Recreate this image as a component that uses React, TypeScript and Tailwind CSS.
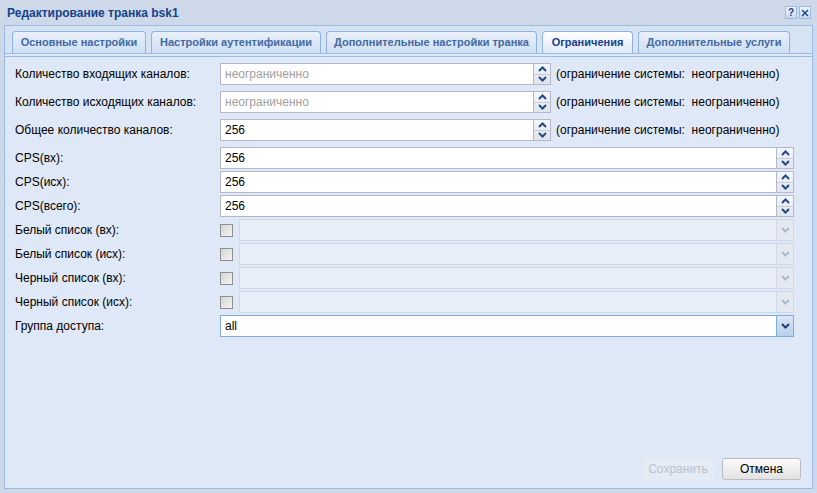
import React from "react";

const font = { fontFamily: '"Liberation Sans", Arial, sans-serif' };

function Chevron({ up, color = "#1f4a8a" }: { up?: boolean; color?: string }) {
  return (
    <svg width="9" height="6" viewBox="0 0 9 6">
      <path d={up ? "M1 5 L4.5 1.5 L8 5" : "M1 1 L4.5 4.5 L8 1"} fill="none" stroke={color} strokeWidth="2" />
    </svg>
  );
}

function Spinner() {
  return (
    <div className="flex h-full w-[17px] shrink-0 flex-col border-l border-[#b5b8c8] bg-gradient-to-b from-[#f4f6fa] to-[#dfe3ea]">
      <div className="flex flex-1 items-center justify-center border-b border-[#c8ccd6]">
        <Chevron up />
      </div>
      <div className="flex flex-1 items-center justify-center">
        <Chevron />
      </div>
    </div>
  );
}

function NumberField({ value, placeholder, wide }: { value?: string; placeholder?: string; wide?: boolean }) {
  return (
    <div className={`flex h-[22px] items-stretch border border-[#b5b8c8] bg-white ${wide ? "flex-1" : "w-[331px]"}`}>
      <div className={`flex flex-1 items-center px-[4px] text-[12px] ${value ? "text-black" : "text-[#a0a0a0]"}`}>
        {value ?? placeholder}
      </div>
      <Spinner />
    </div>
  );
}

function Combo({ value, disabled }: { value?: string; disabled?: boolean }) {
  return (
    <div
      className={`flex h-[22px] flex-1 items-stretch border ${
        disabled ? "border-[#d0d8e6] bg-[#e8eef8]" : "border-[#7eadd9] bg-white"
      }`}
    >
      <div className="flex flex-1 items-center px-[4px] text-[12px] text-black">{value}</div>
      <div
        className={`flex w-[17px] shrink-0 items-center justify-center border-l ${
          disabled ? "border-[#d0d8e6] bg-[#e3e8f1]" : "border-[#7eadd9] bg-gradient-to-b from-[#dbe7f5] to-[#b9cfe9]"
        }`}
      >
        <Chevron color={disabled ? "#a9b8cf" : "#1f3f73"} />
      </div>
    </div>
  );
}

function Checkbox() {
  return <div className="h-[13px] w-[13px] shrink-0 border border-[#8e8f91] bg-gradient-to-br from-[#d4d4d4] to-[#f5f5f5]" />;
}

function Row({ label, children, mb = "mb-[2px]" }: { label: string; children: React.ReactNode; mb?: string }) {
  return (
    <div className={`flex h-[22px] items-center ${mb}`}>
      <div className="w-[205px] shrink-0 text-[12px] text-black">{label}</div>
      {children}
    </div>
  );
}

const tabs = [
  { t: "Основные настройки", w: "w-[134px]" },
  { t: "Настройки аутентификации", w: "w-[170px]" },
  { t: "Дополнительные настройки транка", w: "w-[211px]" },
  { t: "Ограничения", w: "w-[91px]" },
  { t: "Дополнительные услуги", w: "w-[152px]" },
];

const limit = "(ограничение системы:\u00a0 неограниченно)";

export default function App() {
  return (
    <div className="relative h-[493px] w-[817px] overflow-hidden bg-[#cdd9e8]" style={font}>
      <div className="flex h-[25px] items-center justify-between pl-[7px] pr-[6px]">
        <span className="text-[12px] font-bold text-[#15428b]">Редактирование транка bsk1</span>
        <div className="flex gap-[2px]">
          <div className="flex h-[13px] w-[12px] items-center justify-center border border-[#99bbe8] bg-gradient-to-b from-[#f0f5fb] to-[#c8d9ef] text-[10px] font-bold leading-none text-[#15428b]">
            ?
          </div>
          <div className="flex h-[13px] w-[12px] items-center justify-center border border-[#99bbe8] bg-gradient-to-b from-[#f0f5fb] to-[#c8d9ef]">
            <svg width="8" height="8" viewBox="0 0 8 8">
              <path d="M1 1 L7 7 M7 1 L1 7" stroke="#15428b" strokeWidth="1.4" />
            </svg>
          </div>
        </div>
      </div>

      <div className="mx-[4px] flex h-[464px] flex-col border border-[#99bbe8] bg-[#dfe8f6]">
        <div className="flex items-end gap-[5px] border-b border-[#99bbe8] bg-[#d6e3f2] pl-[7px] pt-[5px]">
          {tabs.map(({ t, w }, i) => {
            const active = i === 3;
            return (
              <div
                key={t}
                className={`flex h-[22px] shrink-0 items-center justify-center whitespace-nowrap rounded-t-[4px] border border-b-0 border-[#8db2e3] text-[11px] font-bold ${w} ${
                  active
                    ? "bg-gradient-to-b from-white to-[#dfe8f6] text-[#15428b]"
                    : "bg-gradient-to-b from-[#e9f0fa] to-[#cfdef2] text-[#416aa3]"
                }`}
              >
                {t}
              </div>
            );
          })}
        </div>
        <div className="h-[3px] border-b border-[#99bbe8] bg-[#dfe8f6]" />

        <div className="flex flex-1 flex-col px-[10px] pt-[6px]">
          <Row label="Количество входящих каналов:" mb="mb-[6px]">
            <NumberField placeholder="неограниченно" />
            <span className="ml-[5px] whitespace-nowrap text-[12px] text-black">{limit}</span>
          </Row>
          <Row label="Количество исходящих каналов:" mb="mb-[6px]">
            <NumberField placeholder="неограниченно" />
            <span className="ml-[5px] whitespace-nowrap text-[12px] text-black">{limit}</span>
          </Row>
          <Row label="Общее количество каналов:" mb="mb-[6px]">
            <NumberField value="256" />
            <span className="ml-[5px] whitespace-nowrap text-[12px] text-black">{limit}</span>
          </Row>
          <div className="pr-[8px]">
            <Row label="CPS(вх):">
              <NumberField value="256" wide />
            </Row>
            <Row label="CPS(исх):">
              <NumberField value="256" wide />
            </Row>
            <Row label="CPS(всего):">
              <NumberField value="256" wide />
            </Row>
            {["Белый список (вх):", "Белый список (исх):", "Черный список (вх):", "Черный список (исх):"].map((l) => (
              <Row key={l} label={l}>
                <Checkbox />
                <div className="ml-[6px] flex flex-1">
                  <Combo disabled />
                </div>
              </Row>
            ))}
            <Row label="Группа доступа:">
              <Combo value="all" />
            </Row>
          </div>

          <div className="mb-[8px] mt-auto flex justify-end gap-[8px] pr-[1px]">
            <div className="flex h-[22px] w-[72px] items-center justify-center rounded-[2px] bg-[#e4ebf5] text-[12px] text-[#b9c2cf]">
              Сохранить
            </div>
            <div className="flex h-[22px] w-[79px] items-center justify-center rounded-[3px] border border-[#b9bcc1] bg-gradient-to-b from-[#fbfbfb] to-[#e2e2e2] text-[12px] text-black">
              Отмена
            </div>
          </div>
        </div>
      </div>
    </div>
  );
}
